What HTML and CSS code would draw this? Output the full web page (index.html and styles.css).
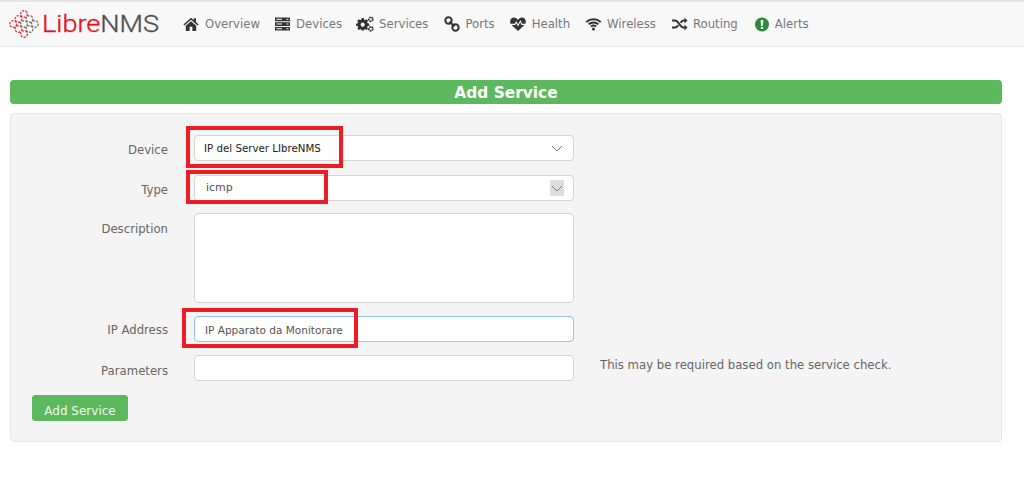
FILE: index.html
```html
<!DOCTYPE html>
<html lang="en">
<head>
<meta charset="utf-8">
<title>Add Service</title>
<link rel="stylesheet" href="styles.css">
</head>
<body>
<nav class="navbar">
  <a class="brand">
    <svg class="logo" width="30" height="30" viewBox="0 0 30 30" fill="none" stroke-width="1.300" stroke-dasharray="2.200 1.200">
      <g class="logo-red">
        <circle cx="15" cy="5" r="3.400"/><circle cx="9.500" cy="10" r="3.400"/>
        <circle cx="4.200" cy="15" r="3.400"/><circle cx="9.500" cy="20" r="3.400"/><circle cx="15" cy="25" r="3.400"/>
      </g>
      <g class="logo-gray">
        <circle cx="20.500" cy="10" r="3.400"/><circle cx="15" cy="15" r="3.400"/><circle cx="25.800" cy="15" r="3.400"/>
        <circle cx="20.500" cy="20" r="3.400"/>
      </g>
    </svg>
    <span class="brand-text"><span class="brand-red">Libre</span>NMS</span>
  </a>
  <ul class="nav-list">
    <li class="nav-item"><svg class="ico ico-home" viewBox="0 0 16 16"><path d="M8 1.800 .4 8.400l1 1.100L8 3.800l6.600 5.700 1-1.100L13 6.100V2.300H10.800V4.200ZM2.800 9.800V15H6.600V10.800H9.400V15H13.200V9.800L8 5.300Z"/></svg>Overview</li>
    <li class="nav-item nav-tight"><svg class="ico" viewBox="0 0 16 16"><path d="M.5 1.500h15v3.700H.5ZM.5 6.200h15v3.700H.5ZM.5 10.900h15v3.700H.5Z"/><path class="ico-cut" d="M2 3.300h5.500M2 8h5.500M2 12.700h5.500M12 3.300h2M12 8h2M12 12.700h2"/></svg>Devices</li>
    <li class="nav-item nav-tight"><svg class="ico ico-services" viewBox="0 0 18 16"><path fill-rule="evenodd" d="M5 3.400H7.200L7.600 5.100 8.700 5.600 10.200 4.700 11.700 6.300 10.800 7.800 11.300 8.900 13 9.300V11.500L11.300 11.900 10.800 13 11.700 14.500 10.200 16 8.700 15.100 7.600 15.600 7.200 16.500H5L4.600 15.600 3.500 15.100 2 16 .4 14.500 1.300 13 .8 11.900-.9 11.500V9.300L.8 8.900 1.300 7.800.4 6.300 2 4.700 3.500 5.600 4.600 5.100ZM6.100 8.200a2.200 2.200 0 1 0 .01 0Z" transform="translate(.9 -1.200) scale(.95)"/><circle class="ico-ring" cx="14.800" cy="3.300" r="2"/><circle class="ico-ring" cx="14.800" cy="12.800" r="2"/></svg>Services</li>
    <li class="nav-item nav-loose"><svg class="ico ico-ports" viewBox="0 0 16 16"><circle class="ico-ring2" cx="4.500" cy="4.500" r="3.200"/><circle class="ico-ring2" cx="11.500" cy="11.500" r="3.200"/><path class="ico-line" d="M5.500 5.500l5 5"/></svg>Ports</li>
    <li class="nav-item nav-tight"><svg class="ico ico-health" viewBox="0 0 16 16"><path d="M8 15 1.600 8.900H5.200L6.300 7.300 8 10.800 10.300 6.300 11.400 8.900H14.400ZM.6 7.800C-.6 4.800 1 1.500 3.900 1.500 5.600 1.500 7.100 2.500 8 4 8.900 2.500 10.400 1.500 12.100 1.500 15 1.500 16.600 4.800 15.400 7.800H12.100L10.400 4 8 8.600 6.400 5.100 4.600 7.800Z"/></svg>Health</li>
    <li class="nav-item"><svg class="ico" viewBox="0 0 16 16"><path class="ico-line2" d="M.8 6C4.800 2.400 11.200 2.400 15.200 6M3.100 8.300C5.900 5.800 10.100 5.800 12.900 8.300M5.400 10.600C6.900 9.300 9.100 9.300 10.600 10.600"/><circle cx="8" cy="13" r="1.500"/></svg>Wireless</li>
    <li class="nav-item"><svg class="ico" viewBox="0 0 16 16"><path class="ico-line2" d="M.5 4.500H3.500C7.500 4.500 8 11.500 12 11.500H13.500M.5 11.500H3.500C5 11.500 6 10.500 6.700 9.300M9 6.700C9.800 5.500 10.500 4.500 12 4.500H13.500"/><path d="M13 1.500 16 4.500 13 7.500ZM13 8.500 16 11.500 13 14.500Z"/></svg>Routing</li>
    <li class="nav-item nav-loose"><svg class="ico ico-alert" viewBox="0 0 16 16"><circle cx="8" cy="8.500" r="7"/><path class="ico-white" d="M6.700 3.900H9.300L9 9.900H7ZM6.900 11H9.100V13.100H6.900Z"/></svg>Alerts</li>
  </ul>
</nav>

<main class="page">
  <h1 class="title-bar">Add Service</h1>
  <form class="well">
    <div class="row">
      <label class="row-label row-label-low">Device</label>
      <div class="control">
        <div class="field field-select field-device">IP del Server LIbreNMS
          <svg class="chevron" width="12" height="7" viewBox="0 0 12 7"><path d="M1 1 6 6 11 1"/></svg>
        </div>
        <span class="mark mark-device"></span>
      </div>
    </div>
    <div class="row">
      <label class="row-label row-label-low">Type</label>
      <div class="control">
        <div class="field field-select field-type">icmp
          <span class="chevron-box"><svg class="chevron" width="12" height="7" viewBox="0 0 12 7"><path d="M1 1 6 6 11 1"/></svg></span>
        </div>
        <span class="mark mark-type"></span>
      </div>
    </div>
    <div class="row row-desc">
      <label class="row-label">Description</label>
      <div class="control"><div class="field field-area"></div></div>
    </div>
    <div class="row row-ip">
      <label class="row-label">IP Address</label>
      <div class="control">
        <div class="field field-focus">IP Apparato da Monitorare</div>
        <span class="mark mark-ip"></span>
      </div>
    </div>
    <div class="row row-params">
      <label class="row-label row-label-lower">Parameters</label>
      <div class="control"><div class="field"></div></div>
      <p class="help">This may be required based on the service check.</p>
    </div>
    <button class="btn" type="button">Add Service</button>
  </form>
</main>
</body>
</html>
```
FILE: styles.css
```css
* { box-sizing: border-box; }
html, body { margin: 0; padding: 0; }
body {
  background: #fff;
  color: #666;
  font-family: "DejaVu Sans", Verdana, sans-serif;
  font-size: 12px;
  height: 496px;
  overflow: hidden;
}
.navbar {
  display: flex;
  align-items: center;
  height: 47px;
  background: #f8f8f8;
  border-top: 2px solid #e4e4e4;
  border-bottom: 1px solid #e7e7e7;
  padding-left: 9px;
}
.brand { display: flex; align-items: center; width: 173px; flex: none; }
.logo { flex: none; }
.logo-red { stroke: #e0303a; }
.logo-gray { stroke: #77696b; }
.brand-text {
  font-family: Roboto, "Liberation Sans", sans-serif;
  font-weight: 300;
  font-size: 24px;
  color: #4f4f4f;
  margin-left: 3px;
  -webkit-text-stroke: .35px currentColor;
  transform: scaleX(1.13);
  transform-origin: left center;
}
.brand-red { color: #e8111f; }
.nav-list { display: flex; align-items: center; list-style: none; margin: 0; padding: 0; gap: 15px; }
.nav-item { display: flex; align-items: center; gap: 5px; color: #777; font-size: 11.700px; white-space: nowrap; }
.nav-tight { margin-left: -1px; }
.nav-loose { margin-left: 1px; }
.ico { width: 17px; height: 16px; fill: #333; flex: none; }
.ico-home { width: 18px; }
.ico-services { width: 18px; }
.ico-ports { width: 16px; }
.ico-health { width: 18px; }
.ico-cut { stroke: #f8f8f8; stroke-width: 1; fill: none; }
.ico-ring { fill: none; stroke: #333; stroke-width: 1.800; stroke-dasharray: 1.600 .7; }
.ico-ring2 { fill: none; stroke: #333; stroke-width: 2; }
.ico-line { stroke: #333; stroke-width: 2; fill: none; }
.ico-line2 { stroke: #333; stroke-width: 2; fill: none; }
.ico-alert { width: 16px; fill: #2f8a3c; }
.ico-white { fill: #f8f8f8; }

.page { padding: 33px 22px 0 10px; }
.title-bar {
  margin: 0;
  height: 24px;
  line-height: 26px;
  background: #5cb85c;
  border-radius: 4px;
  color: #fff;
  font-size: 15.400px;
  font-weight: 700;
  text-align: center;
}
.well {
  margin-top: 9px;
  height: 329px;
  background: #f4f4f4;
  border: 1px solid #e6e6e6;
  border-radius: 4px;
  padding: 21px 21px 0;
}
.row { display: flex; align-items: center; height: 26px; margin-bottom: 14px; }
.row-label {
  width: 136px;
  flex: none;
  text-align: right;
  color: #666;
  font-size: 11.700px;
  padding-top: 2px;
}
.row-label-low { padding-top: 4px; }
.row-label-lower { padding-top: 6px; }
.control { position: relative; width: 380px; margin-left: 26px; flex: none; }
.field {
  height: 26px;
  background: #fff;
  border: 1px solid #d4d4d4;
  border-radius: 4px;
  color: #555;
  font-size: 10.500px;
  line-height: 24px;
  padding: 0 9px;
  position: relative;
  white-space: nowrap;
}
.field-select { color: #222; }
.field-device { font-size: 10.250px; }
.field-type { color: #555; padding-left: 11px; font-size: 11px; }
.chevron { fill: none; stroke: #777; stroke-width: 1; }
.field-select > .chevron { position: absolute; right: 10px; top: 9px; }
.chevron-box {
  position: absolute; right: 9px; top: 4px;
  width: 14px; height: 16px;
  background: #ddd;
  display: flex; align-items: center; justify-content: center;
}
.row-desc { height: 90px; margin-bottom: 13px; margin-top: -2px; align-items: flex-start; }
.row-desc .row-label { padding-top: 9px; }
.field-area { height: 90px; }
.row-ip { margin-bottom: 13px; }
.field-focus { border-color: #8ec4ee; padding-left: 10px; padding-top: 1px; }
.row-params { margin-bottom: 14px; }
.help { margin: 0 0 0 26px; padding-bottom: 6px; color: #666; font-size: 11.700px; }
.btn {
  display: block;
  width: 96px;
  height: 26px;
  padding: 6px 0 0;
  background: #5cb85c;
  border: 1px solid #5fbb5f;
  border-radius: 3px;
  color: #eef8ee;
  font-family: inherit;
  font-size: 12px;
}
.mark { position: absolute; border: 4px solid #ee1c25; pointer-events: none; }
.mark-device { left: -8px; top: -9px; width: 157px; height: 42px; }
.mark-type { left: -8px; top: -5px; width: 142px; height: 34px; }
.mark-ip { left: -12px; top: -8px; width: 176px; height: 40px; }
```
